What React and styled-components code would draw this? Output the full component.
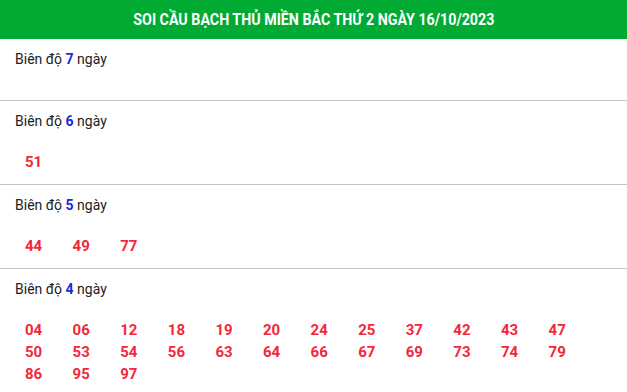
import styled, { createGlobalStyle } from "styled-components";

const GlobalStyle = createGlobalStyle`
  body {
    margin: 0;
    background: #fff;
    font-family: Roboto, "Liberation Sans", sans-serif;
  }
`;

const sections = [
  { days: 7, numbers: [] },
  { days: 6, numbers: ["51"] },
  { days: 5, numbers: ["44", "49", "77"] },
  {
    days: 4,
    numbers: [
      "04", "06", "12", "18", "19", "20", "24", "25", "37", "42", "43", "47",
      "50", "53", "54", "56", "63", "64", "66", "67", "69", "73", "74", "79",
      "86", "95", "97",
    ],
  },
];

export default function App() {
  return (
    <>
      <GlobalStyle />
      <Wrapper>
        <Header>
          <Title>SOI CẦU BẠCH THỦ MIỀN BẮC THỨ 2 NGÀY 16/10/2023</Title>
        </Header>
        {sections.map((s) => (
          <Section key={s.days}>
            <Label>
              Biên độ <Days>{s.days}</Days> ngày
            </Label>
            <Numbers>
              {s.numbers.map((n) => (
                <Num key={n}>{n}</Num>
              ))}
            </Numbers>
          </Section>
        ))}
      </Wrapper>
    </>
  );
}

const Wrapper = styled.div`
  width: 627px;
  overflow: hidden;
`;

const Header = styled.div`
  height: 39px;
  background: #00aa33;
  display: flex;
  align-items: center;
  justify-content: center;
`;

const Title = styled.h1`
  margin: 0;
  color: #fff;
  font-size: 16px;
  font-weight: 700;
  display: inline-block;
  transform: scaleX(0.89);
  white-space: nowrap;
`;

const Section = styled.div`
  padding-top: 10px;
  border-bottom: 1px solid #c4c4c4;
`;

const Label = styled.div`
  padding-left: 15px;
  font-size: 14px;
  line-height: 20px;
  color: #222;
`;

const Days = styled.b`
  color: #1a2bd6;
`;

const Numbers = styled.div`
  display: grid;
  grid-template-columns: repeat(12, 47.6px);
  padding: 20px 0 11px 25px;
`;

const Num = styled.span`
  font-size: 15px;
  font-weight: 700;
  line-height: 22px;
  color: #f2283a;
`;
